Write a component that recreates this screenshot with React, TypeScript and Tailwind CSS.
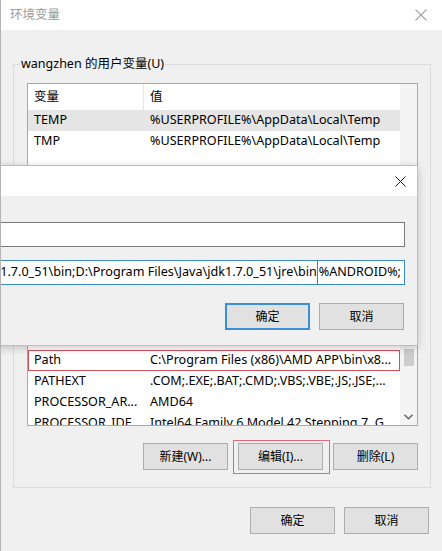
import React from 'react';

const font = { fontFamily: '"Noto Sans", "Noto Sans CJK SC", sans-serif' };

function CloseIcon({ color, size = 11 }: { color: string; size?: number }) {
  return (
    <svg width={size} height={size} viewBox="0 0 11 11" fill="none" stroke={color} strokeWidth="1">
      <path d="M0.5 0.5 L10.5 10.5 M10.5 0.5 L0.5 10.5" />
    </svg>
  );
}

function Btn({ label, primary, w = 85 }: { label: string; primary?: boolean; w?: number }) {
  return (
    <div
      className={`h-[27px] flex items-center justify-center bg-[#e1e1e1] text-[12px] text-black ${
        primary ? 'border-2 border-[#3c8fd6]' : 'border border-[#adadad]'
      }`}
      style={{ width: w }}
    >
      {label}
    </div>
  );
}

function Row({ name, value, selected, outlined }: { name: string; value: string; selected?: boolean; outlined?: boolean }) {
  return (
    <div
      className={`flex h-[21px] items-center text-[12.6px] text-black whitespace-nowrap ${selected ? 'bg-[#e5e5e5]' : ''} ${
        outlined ? 'outline outline-1 outline-[#d0505a] -outline-offset-1' : ''
      }`}
    >
      <div className="w-[116px] pl-[6px] overflow-hidden">{name}</div>
      <div className="flex-1 pl-[6px] overflow-hidden">{value}</div>
    </div>
  );
}

export default function App() {
  return (
    <div className="relative w-[442px] h-[551px] overflow-hidden bg-[#f0f0f0] border-l border-[#b4b4b4]" style={font}>
      {/* back window: 环境变量 */}
      <div className="h-[30px] bg-white flex items-center justify-between pl-[9px] pr-[15px]">
        <span className="text-[12.5px] text-[#9a9a9a]">环境变量</span>
        <CloseIcon color="#9a9a9a" size={12} />
      </div>

      <div className="relative ml-[12px] mt-[34px] w-[418px] h-[424px] border border-[#dcdcdc] pt-[18px] pl-[13px] pr-[11px]">
        <span className="absolute left-[6px] top-[-10px] bg-[#f0f0f0] px-[1px] text-[12.5px] text-black leading-[18px]">
          wangzhen 的用户变量(U)
        </span>

        <div className="flex h-[343px] w-[391px] border border-[#a8a8a8] bg-white overflow-hidden">
          <div className="flex-1 flex flex-col overflow-hidden">
            <div className="flex h-[26px] items-center text-[12.5px] text-black shrink-0">
              <div className="w-[116px] h-full flex items-center pl-[6px] border-r border-[#e5e5e5]">变量</div>
              <div className="flex-1 pl-[6px]">值</div>
            </div>
            <Row name="TEMP" value="%USERPROFILE%\AppData\Local\Temp" selected />
            <Row name="TMP" value="%USERPROFILE%\AppData\Local\Temp" />
            <div className="flex-1" />
            <Row name="Path" value="C:\Program Files (x86)\AMD APP\bin\x8..." outlined />
            <Row name="PATHEXT" value=".COM;.EXE;.BAT;.CMD;.VBS;.VBE;.JS;.JSE;..." />
            <Row name="PROCESSOR_AR..." value="AMD64" />
            <div className="h-[12px] overflow-hidden shrink-0">
              <Row name="PROCESSOR_IDE..." value="Intel64 Family 6 Model 42 Stepping 7, G..." />
            </div>
          </div>
          <div className="w-[17px] bg-[#f4f4f4] flex flex-col items-center">
            <div className="h-[265px]" />
            <div className="w-[10px] h-[17px] bg-[#cdcdcd]" />
            <div className="flex-1" />
            <svg width="9" height="6" viewBox="0 0 9 6" className="mb-[5px]" fill="none" stroke="#606060" strokeWidth="1.3">
              <path d="M0.5 0.8 L4.5 4.8 L8.5 0.8" />
            </svg>
          </div>
        </div>

        <div className="flex justify-end gap-[10px] mt-[17px] pr-[1px]">
          <Btn label="新建(W)..." />
          <div className="relative">
            <Btn label="编辑(I)..." />
            <div className="absolute -left-[5px] -top-[3px] -right-[7px] -bottom-[4px] border border-[#e06a78]" />
          </div>
          <Btn label="删除(L)" />
        </div>
      </div>

      <div className="flex justify-end gap-[9px] mt-[19px] pr-[13px]">
        <Btn label="确定" />
        <Btn label="取消" />
      </div>

      {/* foreground dialog: 编辑用户变量 */}
      <div className="absolute left-[-60px] top-[165px] w-[477px] h-[181px] border border-[#dcbc7c] bg-[#f0f0f0] shadow-[0_2px_8px_rgba(0,0,0,0.2)]">
        <div className="h-[30px] bg-white flex items-center justify-end pr-[11px]">
          <CloseIcon color="#1a1a1a" size={11} />
        </div>
        <div className="pl-[20px] pr-[12px] pt-[26px]">
          <div className="h-[25px] bg-white border border-[#7a7a7a]" />
          <div className="mt-[13px] h-[25px] bg-white border border-[#3a8ac8] flex items-stretch justify-end overflow-hidden text-[12.6px] text-black whitespace-nowrap">
            <span className="flex items-center">C:\Program Files\Java\jdk1.7.0_51\bin;D:\Program Files\Java\jdk1.7.0_51\jre\bin</span>
            <span className="flex items-center border border-[#c0505e] -my-px -mr-px pl-[1px] pr-[3px]">%ANDROID%;</span>
          </div>
          <div className="flex justify-end gap-[9px] mt-[18px] pr-[1px]">
            <Btn label="确定" primary />
            <Btn label="取消" />
          </div>
        </div>
      </div>
    </div>
  );
}
